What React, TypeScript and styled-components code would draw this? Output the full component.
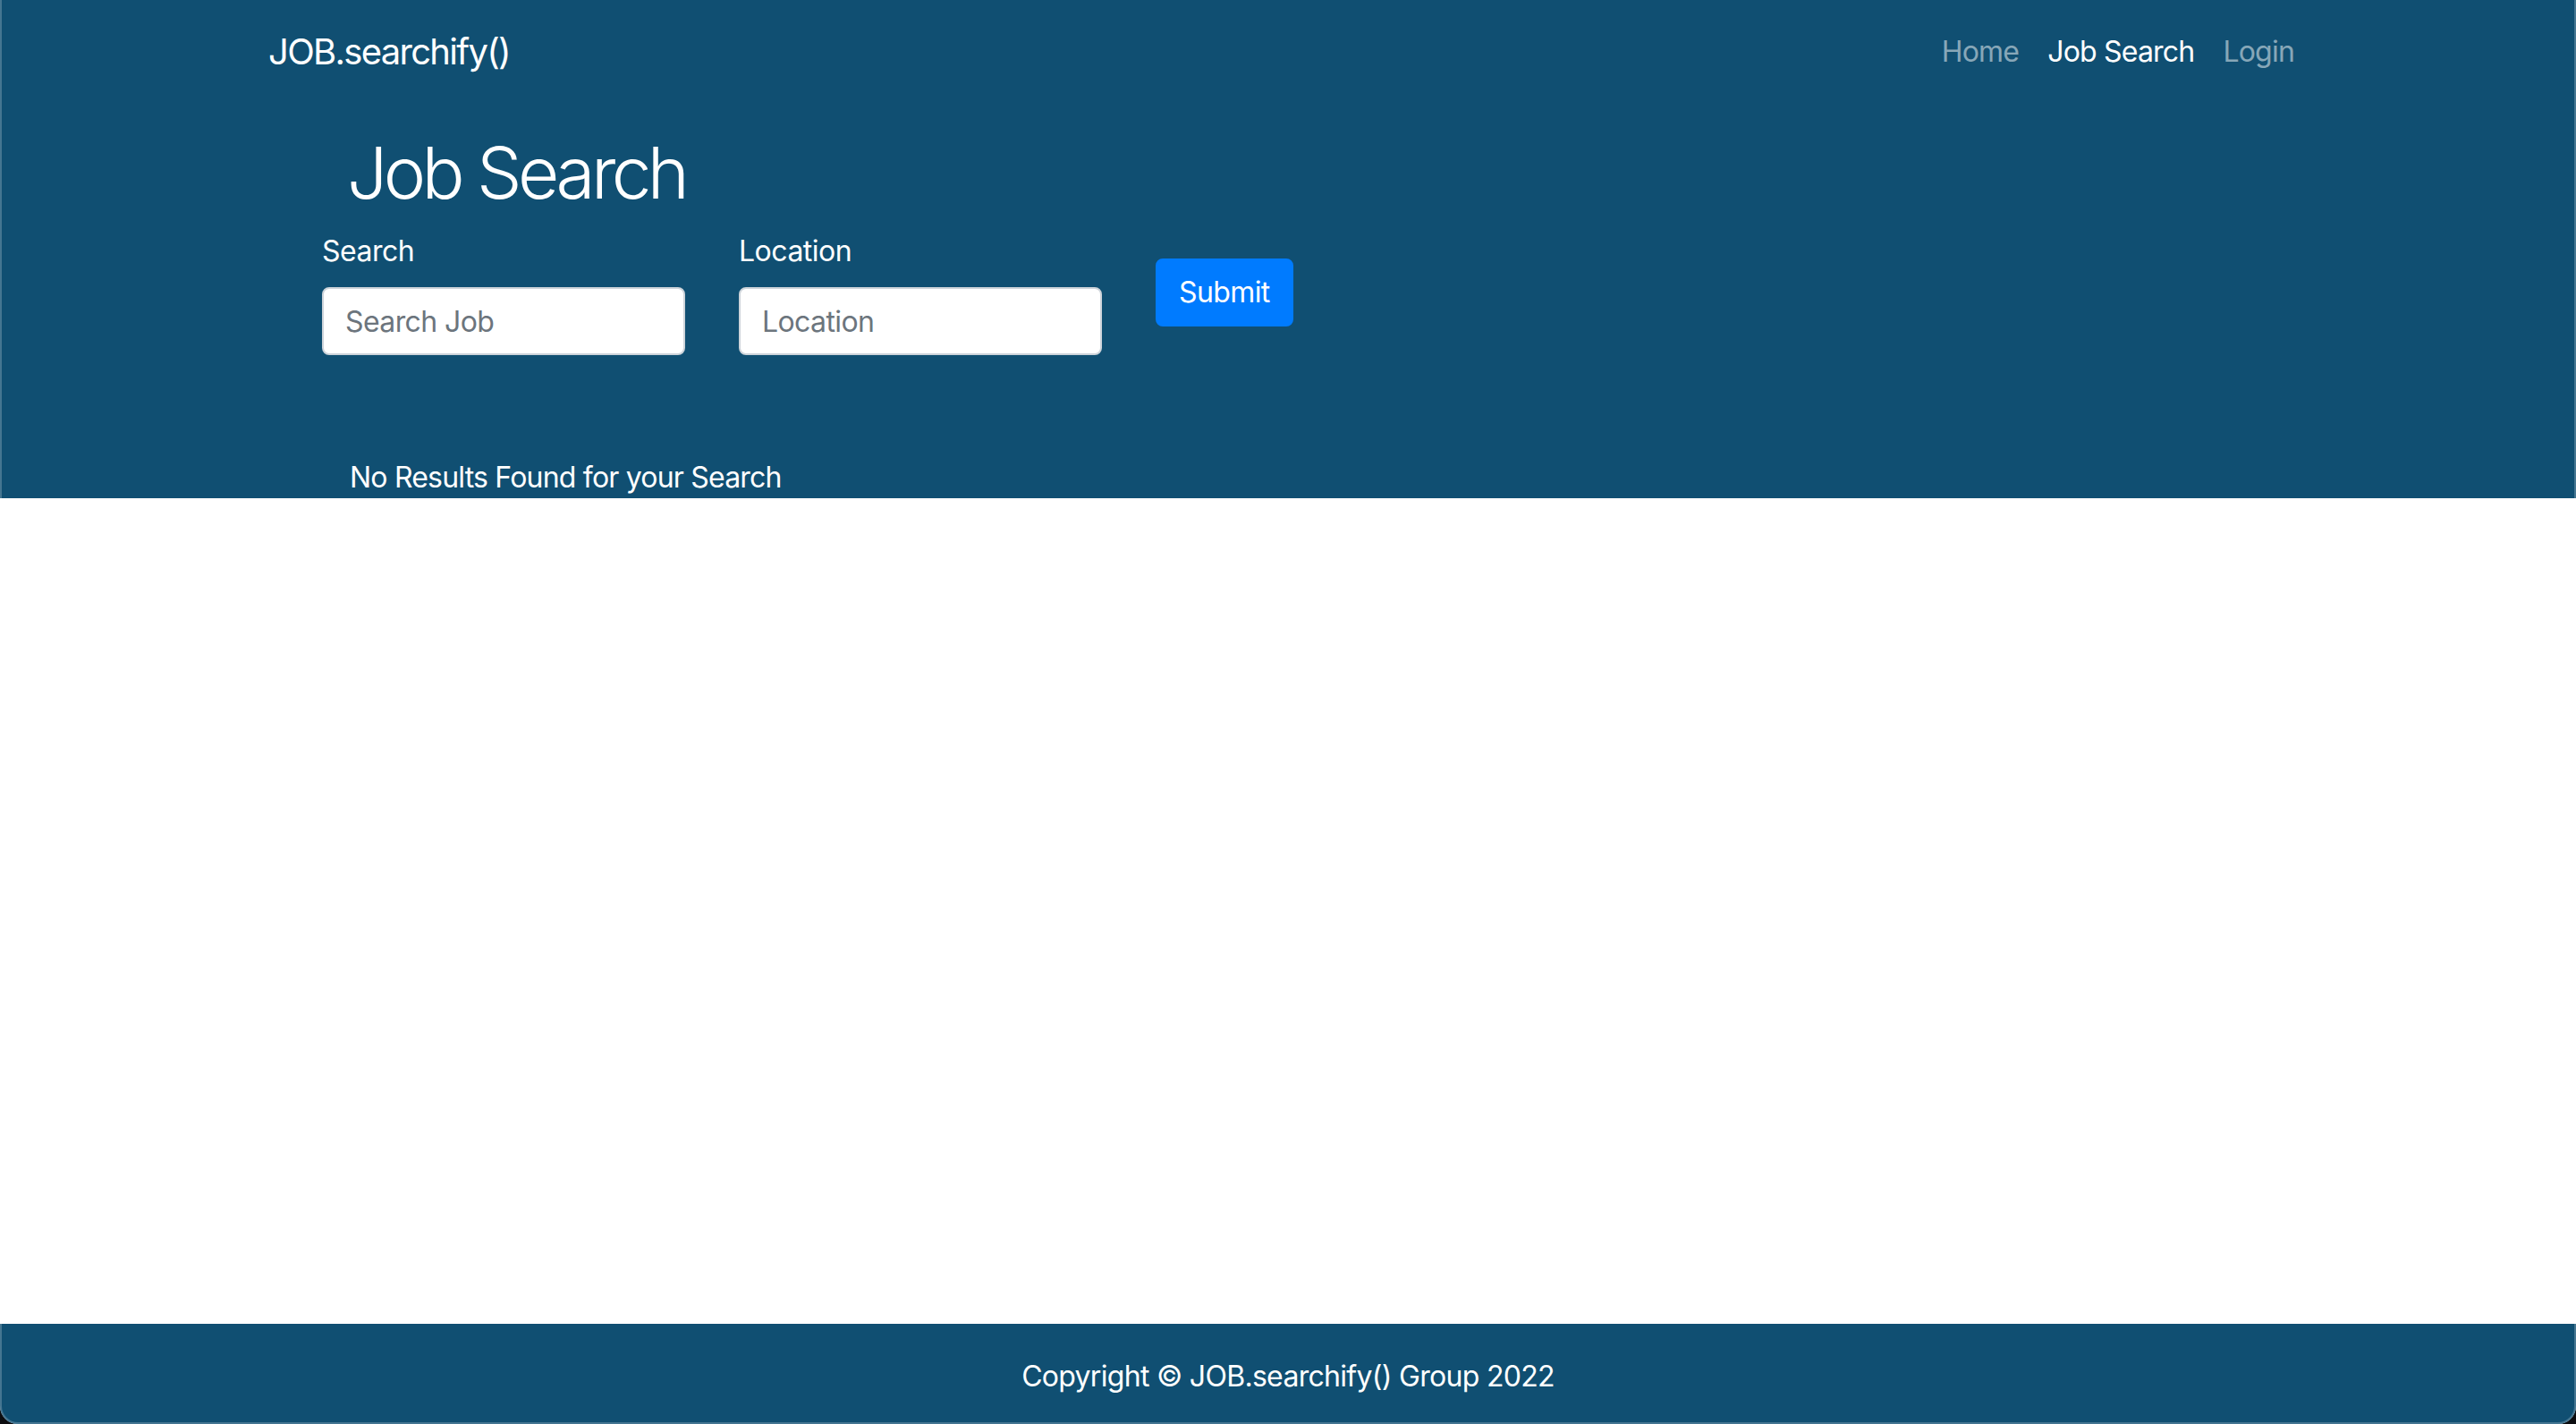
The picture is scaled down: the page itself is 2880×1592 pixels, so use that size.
import React from "react";
import styled, { createGlobalStyle } from "styled-components";

const GlobalStyle = createGlobalStyle`
  html, body {
    margin: 0;
    padding: 0;
    background: #0c0d10;
  }
  * { box-sizing: border-box; }
  body {
    font-family: Inter, "Noto Sans", "Liberation Sans", sans-serif;
    font-size: 32px;
    line-height: 1.5;
    color: #212529;
  }
`;

const Frame = styled.div`
  position: relative;
  min-height: 100vh;
  display: flex;
  flex-direction: column;
  background: #ffffff;
  border-radius: 0 0 20px 20px;
  overflow: hidden;
  &::after {
    content: "";
    position: absolute;
    inset: 0;
    border: 2px solid rgba(255, 255, 255, 0.22);
    border-top: none;
    border-radius: 0 0 20px 20px;
    pointer-events: none;
  }
`;

const Hero = styled.header`
  background: #104f72;
  color: #ffffff;
  display: flex;
  flex-direction: column;
`;

const NavBar = styled.nav`
  height: 114px;
  padding: 18px 299px 16px 300px;
  display: flex;
  align-items: center;
  justify-content: space-between;
`;

const Brand = styled.a`
  font-size: 40px;
  line-height: 60px;
  color: #ffffff;
  text-decoration: none;
  letter-spacing: -1.7px;
`;

const NavList = styled.ul`
  list-style: none;
  margin: 0;
  padding: 0;
  display: flex;
`;

const NavLink = styled.a<{ $active?: boolean }>`
  display: block;
  padding: 16px 16px;
  font-size: 32px;
  line-height: 48px;
  letter-spacing: -0.8px;
  text-decoration: none;
  color: ${(p) => (p.$active ? "#ffffff" : "rgba(255, 255, 255, 0.5)")};
`;

const Main = styled.main`
  padding: 31px 0 0 360px;
  display: flex;
  flex-direction: column;
`;

const Title = styled.h1`
  margin: 0 0 16px 28px;
  font-size: 80px;
  font-weight: 300;
  line-height: 96px;
  letter-spacing: -4.6px;
`;

const FormRow = styled.form`
  display: flex;
  align-items: center;
  gap: 60px;
`;

const Field = styled.div`
  display: flex;
  flex-direction: column;
  width: 406px;
`;

const Label = styled.label`
  font-size: 32px;
  line-height: 48px;
  letter-spacing: -0.5px;
  margin-bottom: 16px;
  color: #ffffff;
`;

const Input = styled.input`
  height: 76px;
  width: 100%;
  padding: 12px 24px;
  font-family: inherit;
  font-size: 32px;
  letter-spacing: -0.6px;
  color: #495057;
  background: #ffffff;
  border: 2px solid #ced4da;
  border-radius: 8px;
  outline: none;
  &::placeholder {
    color: #6c757d;
  }
`;

const SubmitButton = styled.button`
  height: 76px;
  padding: 12px 24px;
  font-family: inherit;
  font-size: 32px;
  line-height: 48px;
  letter-spacing: -0.6px;
  color: #ffffff;
  background: #007bff;
  border: 2px solid #007bff;
  border-radius: 8px;
  cursor: pointer;
`;

const Empty = styled.p`
  margin: 114px 0 0 31px;
  font-size: 32px;
  line-height: 46px;
  letter-spacing: -0.8px;
  color: #ffffff;
`;

const Body = styled.div`
  flex: 1;
`;

const Footer = styled.footer`
  height: 112px;
  background: #104f72;
  color: #ffffff;
  display: flex;
  align-items: center;
  justify-content: center;
  font-size: 32px;
  letter-spacing: -0.7px;
  padding-top: 6px;
`;

export default function App() {
  return (
    <>
      <GlobalStyle />
      <Frame>
        <Hero>
          <NavBar>
            <Brand href="#">JOB.searchify()</Brand>
            <NavList>
              <li><NavLink href="#">Home</NavLink></li>
              <li><NavLink href="#" $active>Job Search</NavLink></li>
              <li><NavLink href="#">Login</NavLink></li>
            </NavList>
          </NavBar>
          <Main>
            <Title>Job Search</Title>
            <FormRow onSubmit={(e) => e.preventDefault()}>
              <Field>
                <Label htmlFor="search">Search</Label>
                <Input id="search" placeholder="Search Job" />
              </Field>
              <Field>
                <Label htmlFor="location">Location</Label>
                <Input id="location" placeholder="Location" />
              </Field>
              <SubmitButton type="submit">Submit</SubmitButton>
            </FormRow>
            <Empty>No Results Found for your Search</Empty>
          </Main>
        </Hero>
        <Body />
        <Footer>Copyright © JOB.searchify() Group 2022</Footer>
      </Frame>
    </>
  );
}
